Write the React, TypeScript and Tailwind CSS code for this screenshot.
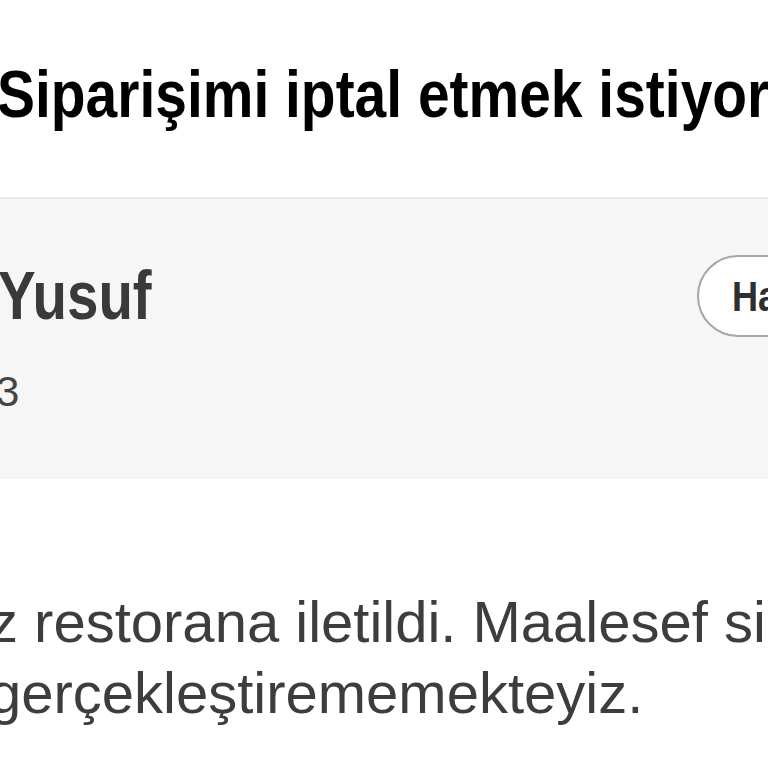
import React from "react";

export default function App() {
  return (
    <div className="w-[768px] h-[768px] overflow-hidden bg-white font-['Liberation_Sans',Arial,sans-serif]">
      <div className="h-[197px] pt-[60px]">
        <div className="ml-[-3px] origin-left scale-x-[0.85] whitespace-nowrap text-[67px] font-bold leading-none text-black">
          Siparişimi iptal etmek istiyorum
        </div>
      </div>
      <div className="h-[2px] bg-[#e7e7e7]" />
      <div className="flex h-[280px] items-start bg-[#f6f6f6]">
        <div className="w-[697px] shrink-0 pt-[62px]">
          <div className="ml-[-2px] origin-left scale-x-[0.83] whitespace-nowrap text-[68px] font-bold leading-none text-[#3a3a3a]">
            Yusuf
          </div>
          <div className="mt-[42px] ml-[-4px] whitespace-nowrap text-[42px] leading-none text-[#454545]">
            3
          </div>
        </div>
        <div className="mt-[56px] flex h-[82px] shrink-0 items-center rounded-full border-2 border-[#a6a6a6] bg-white pl-[33px] pr-[40px]">
          <div className="origin-left scale-x-[0.84] whitespace-nowrap text-[43px] font-bold leading-none text-[#2f2f2f]">
            Hakkında
          </div>
        </div>
      </div>
      <div className="ml-[-11px] mt-[107px] text-[58px] leading-[71px] text-[#3d3d3d]">
        <div className="whitespace-nowrap">z restorana iletildi. Maalesef siparişinizi</div>
        <div className="whitespace-nowrap">gerçekleştirememekteyiz.</div>
      </div>
    </div>
  );
}
